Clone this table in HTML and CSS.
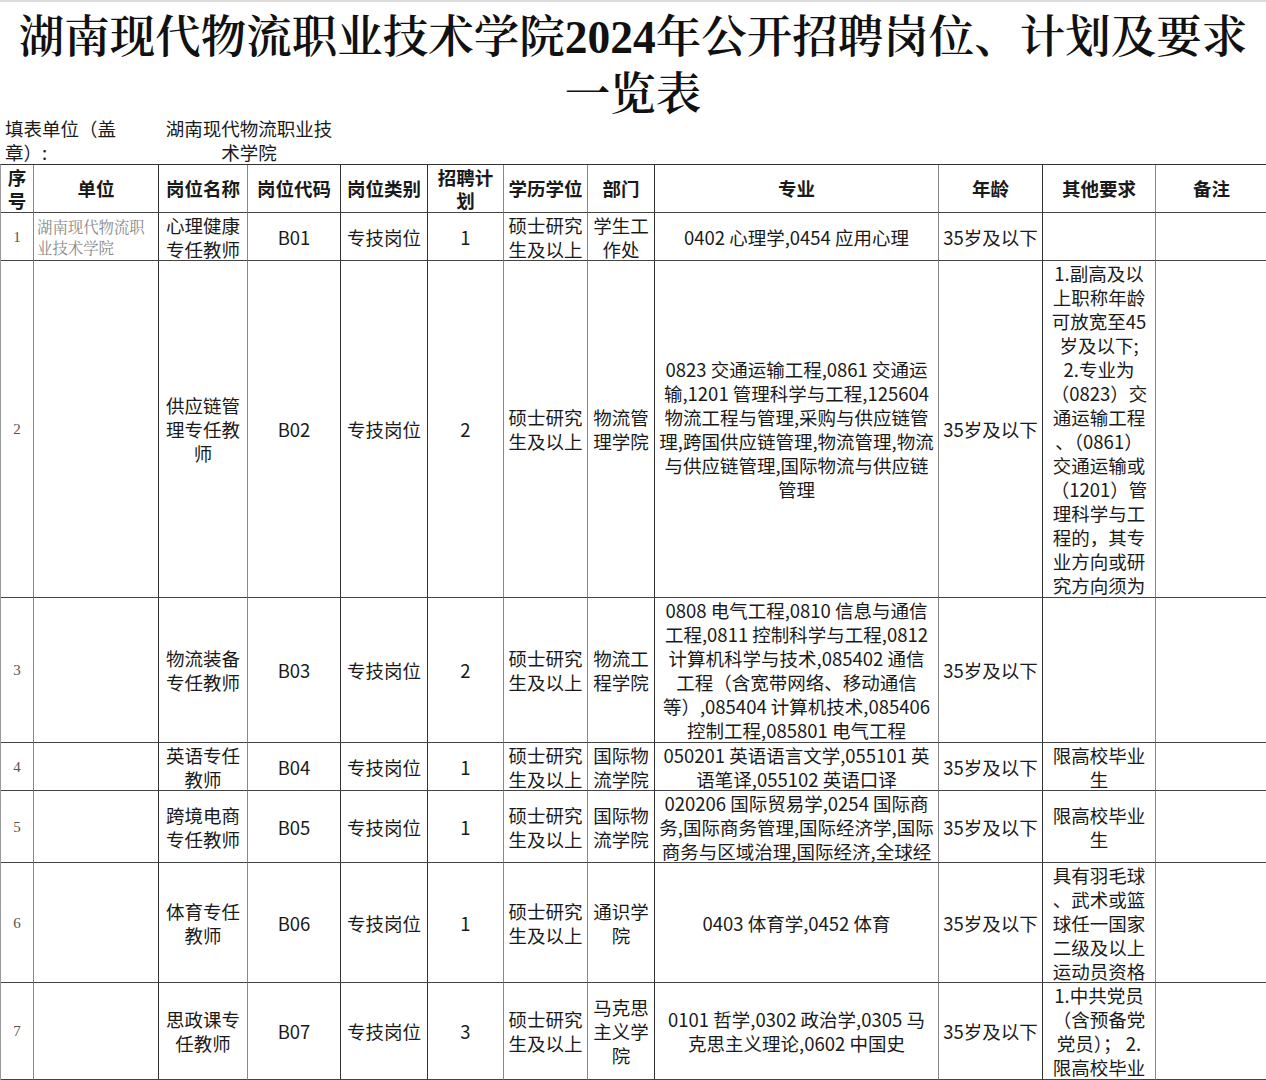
FILE: index.html
```html
<!DOCTYPE html>
<html lang="zh-CN">
<head>
<meta charset="utf-8">
<title>湖南现代物流职业技术学院2024年公开招聘岗位、计划及要求一览表</title>
<link rel="stylesheet" href="styles.css">
</head>
<body>
<div class="page">
  <h1 class="title">湖南现代物流职业技术学院2024年公开招聘岗位、计划及要求<br>一览表</h1>
  <div class="info">
    <div class="info-label">填表单位（盖章）:</div>
    <div class="info-value">湖南现代物流职业技术学院</div>
  </div>
  <div class="sheet">
    <div class="cell head c1">序号</div>
    <div class="cell head c2">单位</div>
    <div class="cell head c3">岗位名称</div>
    <div class="cell head c4">岗位代码</div>
    <div class="cell head c5">岗位类别</div>
    <div class="cell head c6">招聘计划</div>
    <div class="cell head c7">学历学位</div>
    <div class="cell head c8">部门</div>
    <div class="cell head c9">专业</div>
    <div class="cell head c10">年龄</div>
    <div class="cell head c11">其他要求</div>
    <div class="cell head c12">备注</div>

    <div class="cell num c1">1</div>
    <div class="cell unit c2">湖南现代物流职业技术学院</div>
    <div class="cell c3">心理健康专任教师</div>
    <div class="cell c4">B01</div>
    <div class="cell c5">专技岗位</div>
    <div class="cell c6">1</div>
    <div class="cell c7">硕士研究生及以上</div>
    <div class="cell c8">学生工作处</div>
    <div class="cell lines c9">0402 心理学,0454 应用心理</div>
    <div class="cell c10">35岁及以下</div>
    <div class="cell c11"></div>
    <div class="cell c12"></div>

    <div class="cell num c1">2</div>
    <div class="cell unit c2"></div>
    <div class="cell c3">供应链管理专任教师</div>
    <div class="cell c4">B02</div>
    <div class="cell c5">专技岗位</div>
    <div class="cell c6">2</div>
    <div class="cell c7">硕士研究生及以上</div>
    <div class="cell c8">物流管理学院</div>
    <div class="cell lines c9">0823 交通运输工程,0861 交通运<br>输,1201 管理科学与工程,125604<br>物流工程与管理,采购与供应链管<br>理,跨国供应链管理,物流管理,物流<br>与供应链管理,国际物流与供应链<br>管理</div>
    <div class="cell c10">35岁及以下</div>
    <div class="cell lines c11">1.副高及以<br>上职称年龄<br>可放宽至45<br>岁及以下;<br>2.专业为<br>（0823）交<br>通运输工程<br>、（0861）<br>交通运输或<br>（1201）管<br>理科学与工<br>程的，其专<br>业方向或研<br>究方向须为</div>
    <div class="cell c12"></div>

    <div class="cell num c1">3</div>
    <div class="cell unit c2"></div>
    <div class="cell c3">物流装备专任教师</div>
    <div class="cell c4">B03</div>
    <div class="cell c5">专技岗位</div>
    <div class="cell c6">2</div>
    <div class="cell c7">硕士研究生及以上</div>
    <div class="cell c8">物流工程学院</div>
    <div class="cell lines c9">0808 电气工程,0810 信息与通信<br>工程,0811 控制科学与工程,0812<br>计算机科学与技术,085402 通信<br>工程（含宽带网络、移动通信<br>等）,085404 计算机技术,085406<br>控制工程,085801 电气工程</div>
    <div class="cell c10">35岁及以下</div>
    <div class="cell c11"></div>
    <div class="cell c12"></div>

    <div class="cell num c1">4</div>
    <div class="cell unit c2"></div>
    <div class="cell c3">英语专任教师</div>
    <div class="cell c4">B04</div>
    <div class="cell c5">专技岗位</div>
    <div class="cell c6">1</div>
    <div class="cell c7">硕士研究生及以上</div>
    <div class="cell c8">国际物流学院</div>
    <div class="cell lines c9">050201 英语语言文学,055101 英<br>语笔译,055102 英语口译</div>
    <div class="cell c10">35岁及以下</div>
    <div class="cell lines c11">限高校毕业<br>生</div>
    <div class="cell c12"></div>

    <div class="cell num c1">5</div>
    <div class="cell unit c2"></div>
    <div class="cell c3">跨境电商专任教师</div>
    <div class="cell c4">B05</div>
    <div class="cell c5">专技岗位</div>
    <div class="cell c6">1</div>
    <div class="cell c7">硕士研究生及以上</div>
    <div class="cell c8">国际物流学院</div>
    <div class="cell lines c9">020206 国际贸易学,0254 国际商<br>务,国际商务管理,国际经济学,国际<br>商务与区域治理,国际经济,全球经</div>
    <div class="cell c10">35岁及以下</div>
    <div class="cell lines c11">限高校毕业<br>生</div>
    <div class="cell c12"></div>

    <div class="cell num c1">6</div>
    <div class="cell unit c2"></div>
    <div class="cell c3">体育专任教师</div>
    <div class="cell c4">B06</div>
    <div class="cell c5">专技岗位</div>
    <div class="cell c6">1</div>
    <div class="cell c7">硕士研究生及以上</div>
    <div class="cell c8">通识学院</div>
    <div class="cell lines c9">0403 体育学,0452 体育</div>
    <div class="cell c10">35岁及以下</div>
    <div class="cell lines c11">具有羽毛球<br>、武术或篮<br>球任一国家<br>二级及以上<br>运动员资格</div>
    <div class="cell c12"></div>

    <div class="cell num c1">7</div>
    <div class="cell unit c2"></div>
    <div class="cell c3">思政课专任教师</div>
    <div class="cell c4">B07</div>
    <div class="cell c5">专技岗位</div>
    <div class="cell c6">3</div>
    <div class="cell c7">硕士研究生及以上</div>
    <div class="cell c8">马克思主义学院</div>
    <div class="cell lines c9">0101 哲学,0302 政治学,0305 马<br>克思主义理论,0602 中国史</div>
    <div class="cell c10">35岁及以下</div>
    <div class="cell lines c11">1.中共党员<br>（含预备党<br>党员）； 2.<br>限高校毕业</div>
    <div class="cell c12"></div>
  </div>
</div>
</body>
</html>
```

FILE: styles.css
```css
html, body {
  margin: 0;
  padding: 0;
  background: #ffffff;
}

.page {
  width: 1266px;
  border-top: 2px solid #dcdcdc;
  color: #1a1a1a;
  font-family: "Noto Sans CJK SC", "Noto Sans", sans-serif;
}

.title {
  margin: 0;
  padding: 7px 0 0;
  height: 114px;
  box-sizing: border-box;
  text-align: center;
  font-family: "Liberation Serif", "Noto Serif CJK SC", "Noto Sans CJK SC", serif;
  font-size: 45.5px;
  line-height: 57px;
  font-weight: 600;
  color: #111;
}

.info {
  display: flex;
  height: 48px;
  font-size: 18.5px;
  line-height: 24px;
}

.info-label {
  width: 158px;
  box-sizing: border-box;
  padding: 0 30px 0 5px;
}

.info-value {
  width: 182px;
  box-sizing: border-box;
  padding: 0 5px;
  text-align: center;
}

.sheet {
  display: grid;
  grid-template-columns: 33px 125px 89px 93px 87px 76px 84px 67px 284px 104px 113px 112px;
  grid-template-rows: 48px 48px 337px 145px 48px 72px 120px 97px;
  border-top: 1px solid #333;
  border-left: 1px solid #999;
  width: 1266px;
  box-sizing: border-box;
}

.cell {
  box-sizing: border-box;
  border-right: 1px solid #888;
  border-bottom: 1px solid #444;
  display: flex;
  align-items: center;
  justify-content: center;
  text-align: center;
  overflow: hidden;
  padding: 0 3px;
  font-size: 18.5px;
  line-height: 24px;
  word-break: break-all;
}

.c2, .c4, .c5, .c8, .c10 {
  border-right-color: #333;
}

.c1 {
  padding: 0 2px;
}

.head {
  font-weight: 700;
  line-height: 23px;
}

.num {
  font-family: "Liberation Serif", "Noto Serif CJK SC", serif;
  font-size: 15px;
  color: #555;
}

.unit {
  justify-content: flex-start;
  text-align: left;
  padding: 0 3px;
  font-family: "Noto Serif CJK SC", "Liberation Serif", "Noto Sans CJK SC", serif;
  font-size: 15.4px;
  line-height: 21px;
  color: #8a8a8a;
}

.lines {
  white-space: nowrap;
  padding: 0 1px;
}

.c11.lines {
  padding: 0 2px;
}
```
